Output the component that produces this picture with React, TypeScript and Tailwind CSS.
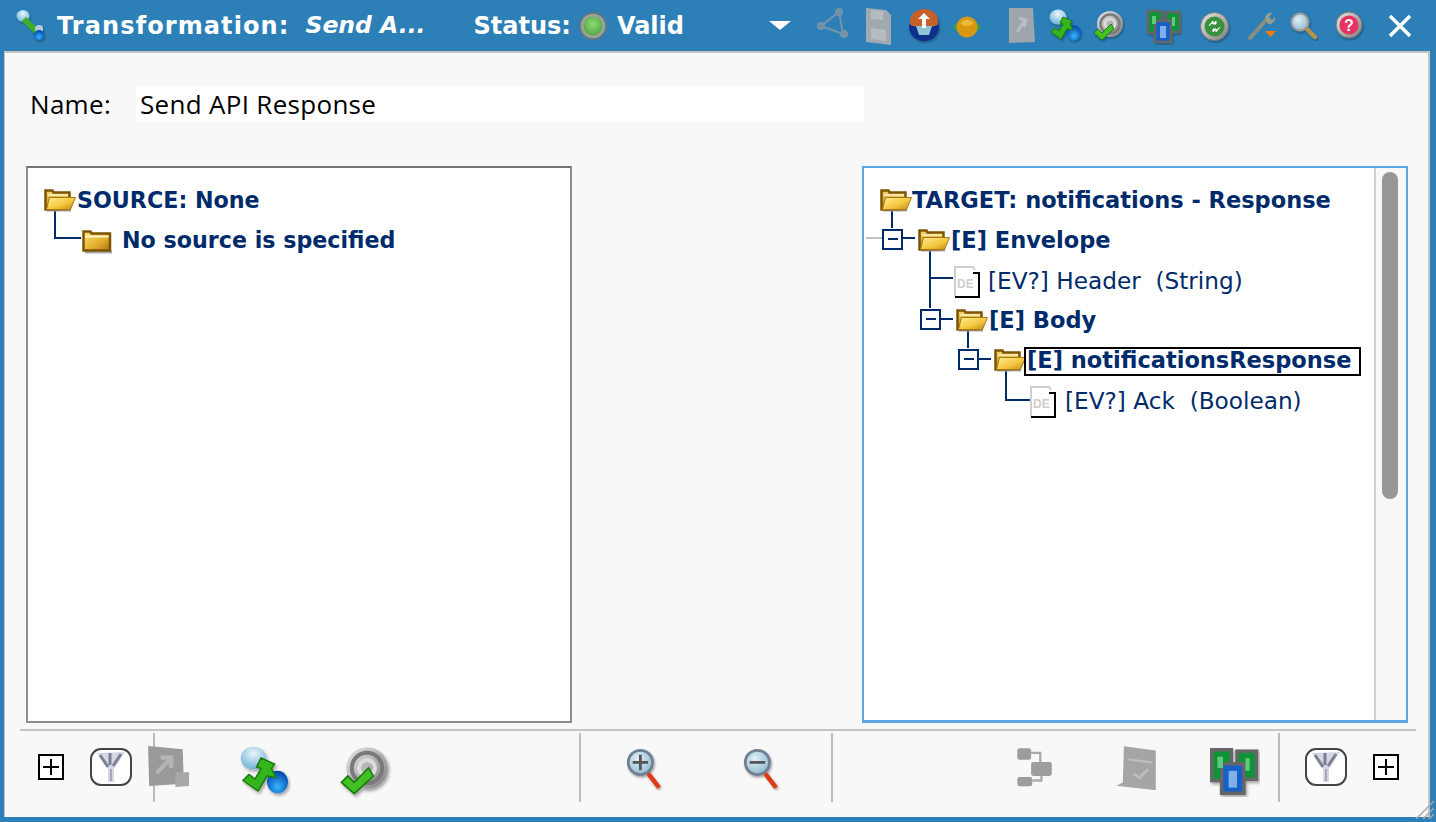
import { ReactNode } from 'react'

const NAVY = '#002b6b'

function SharedDefs() {
  return (
    <svg className="absolute w-0 h-0">
      <defs>
        <linearGradient id="folderBack" x1="0" y1="0" x2="0" y2="1">
          <stop offset="0" stopColor="#f7d670" />
          <stop offset="1" stopColor="#b98519" />
        </linearGradient>
        <linearGradient id="folderFront" x1="0" y1="0" x2="1" y2="1">
          <stop offset="0" stopColor="#ffee94" />
          <stop offset="0.55" stopColor="#f4c840" />
          <stop offset="1" stopColor="#c08a1a" />
        </linearGradient>
        <linearGradient id="folderClosed" x1="0" y1="0" x2="1" y2="1">
          <stop offset="0" stopColor="#fbe27e" />
          <stop offset="0.6" stopColor="#e3ad2c" />
          <stop offset="1" stopColor="#a9741a" />
        </linearGradient>
        <radialGradient id="blueBall" cx="0.5" cy="0.7" r="0.7">
          <stop offset="0" stopColor="#35b5ff" />
          <stop offset="1" stopColor="#0040a8" />
        </radialGradient>
        <radialGradient id="paleBall" cx="0.5" cy="0.3" r="0.7">
          <stop offset="0" stopColor="#eaf6fb" />
          <stop offset="1" stopColor="#6fb3d8" />
        </radialGradient>
        <radialGradient id="greenLed" cx="0.5" cy="0.4" r="0.6">
          <stop offset="0" stopColor="#8fdc72" />
          <stop offset="1" stopColor="#52a648" />
        </radialGradient>
        <linearGradient id="silver" x1="0" y1="0" x2="1" y2="1">
          <stop offset="0" stopColor="#e8e8e8" />
          <stop offset="1" stopColor="#7d7d7d" />
        </linearGradient>
        <radialGradient id="lens" cx="0.4" cy="0.35" r="0.7">
          <stop offset="0" stopColor="#dff0f7" />
          <stop offset="1" stopColor="#8fb8d0" />
        </radialGradient>
        <filter id="softShadow" x="-20%" y="-20%" width="150%" height="150%">
          <feDropShadow dx="1" dy="1.5" stdDeviation="1" floodColor="#000" floodOpacity="0.35" />
        </filter>
      </defs>
    </svg>
  )
}

function FolderOpen({ className = '' }: { className?: string }) {
  return (
    <svg viewBox="0 0 32 24" className={`w-[32px] h-[24px] shrink-0 ${className}`}>
      <path d="M3 23.500h24v-2H3z" fill="#aaa" />
      <path d="M1.500 21.500V2.500h7l1 2h16v16.500z" fill="url(#folderBack)" stroke="#7c5402" strokeWidth="2.500" />
      <path d="M4 7h20" stroke="#fff3c0" strokeWidth="1.500" />
      <path d="M2.500 21.500L5.500 9.500H31.500l-5 12z" fill="url(#folderFront)" stroke="#a87a10" strokeWidth="1" />
    </svg>
  )
}

function FolderClosed({ className = '' }: { className?: string }) {
  return (
    <svg viewBox="0 0 30 25" className={`w-[30px] h-[25px] shrink-0 ${className}`}>
      <path d="M3 24.500h27v-3H3z" fill="#aaa" />
      <path d="M1.500 21.500V2.500h7l1 2h18.500v17z" fill="url(#folderClosed)" stroke="#7c5402" strokeWidth="2.500" />
      <path d="M3 7.500h23.500" stroke="#fff6c8" strokeWidth="2" />
    </svg>
  )
}

function DocDE({ className = '' }: { className?: string }) {
  return (
    <svg viewBox="0 0 26 32" className={`w-[26px] h-[32px] shrink-0 ${className}`}>
      <path d="M1 1h17l3 3v4h4v23H1z" fill="#fff" />
      <path d="M1 31V1h18l2 3" fill="none" stroke="#d0d0d0" strokeWidth="2" />
      <path d="M19 7h6v24H1" fill="none" stroke="#000" strokeWidth="2" />
      <text x="3" y="22" fontSize="12" fontWeight="700" fontFamily="'Liberation Sans', sans-serif" fill="#cfcfcf">DE</text>
    </svg>
  )
}

function Toggle({ className = '' }: { className?: string }) {
  return (
    <div className={`w-[21px] h-[21px] -mt-[2px] shrink-0 border-2 border-[#002b6b] bg-white flex items-center justify-center ${className}`}>
      <div className="w-[10px] h-[2px] bg-[#002b6b]" />
    </div>
  )
}

function PlusBox() {
  return (
    <div className="w-[26px] h-[26px] shrink-0 border-2 border-black bg-white flex items-center justify-center relative">
      <div className="w-[16px] h-[2px] bg-black" />
      <div className="absolute w-[2px] h-[16px] bg-black" />
    </div>
  )
}

function FunnelButton() {
  return (
    <div className="w-[42px] h-[38px] shrink-0 rounded-[11px] border-2 border-[#444] bg-white flex items-center justify-center">
      <svg viewBox="0 0 32 34" className="w-[32px] h-[34px] blur-[0.4px]">
        <path d="M2 3l28-1-11 17v13h-6V19z" fill="#d5d7e4" />
        <path d="M5 5l8 12M15 3v12M26 4l-8 12" stroke="#7c7f98" strokeWidth="3" fill="none" />
        <path d="M16 19v12" stroke="#a4a7ba" strokeWidth="2" />
      </svg>
    </div>
  )
}

// toolbar pictures, blurred a little like scaled-up bitmaps
function Icon({ size = 40, h, scale = 1, children }: { size?: number; h?: number; scale?: number; children: ReactNode }) {
  return (
    <svg
      viewBox={`0 0 ${size} ${h ?? size}`}
      width={size * scale}
      height={(h ?? size) * scale}
      className="shrink-0 blur-[0.5px]"
    >
      {children}
    </svg>
  )
}

type Scaled = { scale?: number }

const DbCheck = ({ scale }: Scaled) => (
  <Icon size={36} scale={scale}>
    <g filter="url(#softShadow)">
      <ellipse cx="11" cy="8" rx="8.500" ry="7.500" fill="url(#paleBall)" />
      <ellipse cx="27" cy="24" rx="7" ry="7.500" fill="url(#blueBall)" />
      <path d="M16 8l9 4-2 3 3 6-6-1-6 10-10-7 4-4 4 3 4-7-3-1z" fill="#36b51c" stroke="#1a7a0c" strokeWidth="1" />
    </g>
  </Icon>
)

const RingCheck = ({ scale }: Scaled) => (
  <Icon size={36} scale={scale}>
    <g filter="url(#softShadow)">
      <circle cx="20" cy="15" r="13" fill="url(#silver)" />
      <circle cx="20" cy="15" r="9.500" fill="none" stroke="#7a7a7a" strokeWidth="2.500" />
      <circle cx="20" cy="15" r="5" fill="none" stroke="#ddd" strokeWidth="2.500" />
      <path d="M4 24l4-4 4 4 9-9 3 5-12 11z" fill="#45c021" stroke="#1a7a0c" strokeWidth="1" />
    </g>
  </Icon>
)

const ScreensIcon = ({ scale }: Scaled) => (
  <Icon size={36} scale={scale}>
    <g filter="url(#softShadow)">
      <rect x="2" y="2" width="14" height="22" fill="#0b9438" stroke="#666" strokeWidth="2.500" />
      <rect x="20" y="3" width="14" height="20" fill="#0b9438" stroke="#666" strokeWidth="2.500" />
      <rect x="9" y="12" width="16" height="21" fill="#1260c8" stroke="#666" strokeWidth="2.500" />
      <rect x="14" y="17" width="6" height="12" fill="#7fb0e6" />
      <rect x="6" y="7" width="4" height="8" fill="#5fc97e" />
      <rect x="26" y="8" width="3" height="9" fill="#5fc97e" />
    </g>
  </Icon>
)

const GrayGraph = () => (
  <Icon size={36}>
    <g stroke="#909aa6" strokeWidth="2" fill="#8c949e" opacity="0.75">
      <path d="M4 20L22 6l4 22z" fill="none" />
      <circle cx="4" cy="20" r="3" />
      <circle cx="22" cy="6" r="3" />
      <circle cx="27" cy="28" r="3" />
    </g>
  </Icon>
)

const GrayFloppy = () => (
  <Icon size={30} h={40}>
    <path d="M3 2l20 2 5 5 0 30-25-3z" fill="#a1a8af" />
    <path d="M8 4l12 1v9l-12-1zM8 22l15 2v11l-15-2z" fill="#b6bcc2" />
  </Icon>
)

const GrayDoc = () => (
  <Icon size={30} h={40}>
    <path d="M2 2h24l2 34-26 1z" fill="#9ea5ac" />
    <path d="M10 26l8-12M12 12l7 2-2 7" stroke="#b9bec4" strokeWidth="3" fill="none" />
  </Icon>
)

const OrangeBowl = () => (
  <Icon size={36}>
    <g filter="url(#softShadow)">
      <ellipse cx="17" cy="13" rx="14" ry="12" fill="#c8612b" />
      <path d="M2 16c2 4 28 4 30 0 1 10-6 17-15 17S1 26 2 16z" fill="#0c2f8a" />
      <path d="M9 18h16l-3 9h-10z" fill="#8fc3d8" />
      <path d="M17 5l6 6h-4v9h-4v-9h-4z" fill="#fff" />
    </g>
  </Icon>
)

const OrangeDot = () => (
  <Icon size={30}>
    <path d="M1 15l6-6v12zM29 15l-6-6v12z" fill="#3fa53a" />
    <circle cx="15" cy="15" r="10.500" fill="#d9980f" />
    <ellipse cx="15" cy="11" rx="6" ry="3" fill="#ecba3a" />
  </Icon>
)

const CircleGreen = () => (
  <Icon size={32}>
    <g filter="url(#softShadow)">
      <circle cx="15.500" cy="15.500" r="14" fill="url(#silver)" stroke="#777" />
      <circle cx="15.500" cy="15.500" r="10" fill="#37913c" />
      <path d="M10 15l4-5v3h3v-3M21 16l-4 5v-3h-3v3" fill="#fff" stroke="#fff" strokeWidth="1" />
    </g>
  </Icon>
)

const Wrench = () => (
  <Icon size={32}>
    <path d="M3 29L22 8" stroke="#8c8f7e" strokeWidth="4" />
    <path d="M19 9c0-4 4-7 7-6l-3 4 3 3 3-3c1 4-3 8-7 7z" fill="#9a9c8c" />
    <path d="M19 21h11l-5.500 6z" fill="#f07c10" />
  </Icon>
)

const Magnifier = () => (
  <Icon size={30}>
    <g filter="url(#softShadow)">
      <path d="M17 17l9 9" stroke="#b2934e" strokeWidth="4.500" strokeLinecap="round" />
      <circle cx="11" cy="11" r="8.500" fill="url(#lens)" stroke="#9a9a9a" strokeWidth="2" />
    </g>
  </Icon>
)

const HelpRed = () => (
  <Icon size={30}>
    <g filter="url(#softShadow)">
      <circle cx="14" cy="14" r="13" fill="url(#silver)" stroke="#777" />
      <circle cx="14" cy="14" r="9.500" fill="#e8305e" />
      <text x="14" y="20" textAnchor="middle" fontSize="16" fontWeight="700" fill="#fff" fontFamily="'Liberation Sans', sans-serif">?</text>
    </g>
  </Icon>
)

const ZoomLens = ({ plus }: { plus?: boolean }) => (
  <Icon size={40} scale={1.1}>
    <g filter="url(#softShadow)">
      <path d="M21 24l10 13" stroke="#dd3a12" strokeWidth="4" />
      <circle cx="14" cy="14" r="11" fill="url(#lens)" stroke="#6f7f92" strokeWidth="2.500" />
      <path d="M7 14h14" stroke="#555" strokeWidth="2.500" />
      {plus && <path d="M14 7v14" stroke="#555" strokeWidth="2.500" />}
    </g>
  </Icon>
)

const GrayExport = () => (
  <Icon size={42} scale={1.05}>
    <path d="M2 1l33 3 1 33-33 2z" fill="#9a9a9a" />
    <path d="M28 26h13v13l-13 1z" fill="#a8a8a8" />
    <path d="M10 27l13-14M14 12h10v10" stroke="#b5b5b5" strokeWidth="4" fill="none" />
  </Icon>
)

const GrayFlow = () => (
  <Icon size={36} scale={1.15}>
    <g fill="#9d9d9d">
      <rect x="2" y="2" width="12" height="10" rx="2" />
      <rect x="14" y="14" width="18" height="12" rx="2" />
      <rect x="2" y="27" width="13" height="8" rx="2" />
    </g>
    <path d="M14 6h8v8M15 30h8v-4" stroke="#aaa" strokeWidth="2" fill="none" />
  </Icon>
)

const GrayScroll = () => (
  <Icon size={42} scale={1.1}>
    <path d="M9 2l29 4v36L2 38l6-3z" fill="#a5a5a5" />
    <path d="M13 14l22 3" stroke="#bdbdbd" strokeWidth="2" />
    <path d="M18 27l5 4 8-8" stroke="#bdbdbd" strokeWidth="2.500" fill="none" />
  </Icon>
)

function Separator() {
  return <div className="w-[2px] h-[69px] bg-[#bdbdbd] shrink-0" />
}

function Row({ className = '', children }: { className?: string; children: ReactNode }) {
  return <div className={`h-[40px] flex items-center whitespace-pre relative [&>span]:mt-[2px] ${className}`}>{children}</div>
}

function Panel({ className = '', lines, children }: { className?: string; lines: ReactNode; children: ReactNode }) {
  return (
    <div className={`w-[546px] h-[557px] border-2 bg-white relative overflow-hidden pt-[12px] font-['DejaVu_Sans',sans-serif] text-[23.200px] text-[#002b6b] [&_.font-bold]:text-[22.500px] ${className}`}>
      <svg className="absolute inset-0 w-full h-full" fill="none" stroke={NAVY} strokeWidth="2">
        {lines}
      </svg>
      {children}
    </div>
  )
}

export default function App() {
  return (
    <div className="w-[1436px] h-[822px] bg-[#2d80b7] flex flex-col overflow-hidden select-none">
      <SharedDefs />

      {/* Title bar */}
      <div className="h-[51px] shrink-0 flex items-center text-white font-['DejaVu_Sans',sans-serif] font-bold text-[24px] whitespace-pre">
        <div className="ml-[14px] w-[43px] shrink-0">
          <Icon size={36}>
            <g filter="url(#softShadow)">
              <ellipse cx="9" cy="8" rx="6.500" ry="6" fill="url(#paleBall)" />
              <path d="M10 11l14 14" stroke="#3fae2a" strokeWidth="6" />
              <circle cx="25" cy="21" r="4" fill="#b8cce0" />
              <circle cx="25" cy="27" r="5" fill="url(#blueBall)" />
            </g>
          </Icon>
        </div>
        <span className="tracking-[1.100px]">Transformation:</span>
        <span className="ml-[16px] italic text-[23.500px]">Send A...</span>
        <span className="ml-[48px]">Status:</span>
        <svg viewBox="0 0 28 28" className="ml-[8px] w-[28px] h-[28px] shrink-0">
          <circle cx="14" cy="14" r="13" fill="#9aa39a" stroke="#6d736d" strokeWidth="1.500" />
          <circle cx="14" cy="14" r="9.500" fill="url(#greenLed)" />
        </svg>
        <span className="ml-[10px]">Valid</span>

        {/* Caret and window actions */}
        <div className="w-0 h-0 ml-[85px] shrink-0 border-x-[11px] border-x-transparent border-t-[9px] border-t-white" />
        <div className="ml-[26px] -mt-[4px]"><GrayGraph /></div>
        <div className="ml-[10px]"><GrayFloppy /></div>
        <div className="ml-[14px]"><OrangeBowl /></div>
        <div className="ml-[9px] mt-[3px]"><OrangeDot /></div>
        <div className="ml-[25px]"><GrayDoc /></div>
        <div className="ml-[10px] mt-[3px]"><DbCheck /></div>
        <div className="ml-[7px] mt-[3px]"><RingCheck /></div>
        <div className="ml-[20px] mt-[3px]"><ScreensIcon /></div>
        <div className="ml-[17px] mt-[2px]"><CircleGreen /></div>
        <div className="ml-[15px]"><Wrench /></div>
        <div className="ml-[11px]"><Magnifier /></div>
        <div className="ml-[16px]"><HelpRed /></div>
        <svg viewBox="0 0 24 24" className="ml-[23px] w-[24px] h-[24px] shrink-0">
          <path d="M2 2l20 20M22 2L2 22" stroke="#fff" strokeWidth="3.500" />
        </svg>
      </div>

      {/* Body */}
      <div className="flex-1 min-h-0 ml-[4px] mr-[6px] bg-[#f8f8f8] border-l border-r-2 border-t-2 border-[#c4c4c4] flex flex-col relative">
        <div className="mt-[33px] h-[36px] flex items-center shrink-0 font-['Open_Sans',sans-serif] text-[26px] tracking-[0.300px] text-black whitespace-pre">
          <span className="ml-[25px]">Name:</span>
          <div className="ml-[25px] w-[728px] h-[36px] bg-white flex items-center pl-[4px]">Send API Response</div>
        </div>

        <div className="mt-[44px] ml-[21px] flex justify-between w-[1382px] shrink-0">
          <Panel
            className="border-[#8e8e8e] border-t-[#737373]"
            lines={<path d="M27 42v28h26" />}
          >
            <Row className="pl-[16px]">
              <FolderOpen />
              <span className="font-bold ml-[1px] !text-[22.200px]">SOURCE: None</span>
            </Row>
            <Row className="pl-[54px]">
              <FolderClosed className="mt-[2px]" />
              <span className="font-bold ml-[10px] !text-[22.200px]">No source is specified</span>
            </Row>
          </Panel>

          <Panel
            className="border-[#5aa7e4] border-b-[3px]"
            lines={
              <>
                <path d="M2 70h16" stroke="#c2c2c2" />
                <path d="M28 40v20M39 70h12" />
                <path d="M66 82v58M66 110h23M76 151h13" />
                <path d="M104 162v18M114 191h13" />
                <path d="M142 202v30h24" />
              </>
            }
          >
            <div className="absolute right-0 top-0 bottom-0 w-[32px] bg-[#f8f8f8] border-l-2 border-[#d0d0d0]">
              <div className="mt-[4px] ml-[6px] w-[16px] h-[327px] rounded-[8px] bg-[#979797]" />
            </div>
            <Row className="pl-[16px]">
              <FolderOpen />
              <span className="font-bold">TARGET: notifications - Response</span>
            </Row>
            <Row className="pl-[18px]">
              <Toggle />
              <FolderOpen className="ml-[15px]" />
              <span className="font-bold ml-[1px]">[E] Envelope</span>
            </Row>
            <Row className="pl-[90px]">
              <DocDE className="mt-[4px]" />
              <span className="ml-[8px]">[EV?] Header  (String)</span>
            </Row>
            <Row className="pl-[56px]">
              <Toggle />
              <FolderOpen className="ml-[15px]" />
              <span className="font-bold ml-[1px]">[E] Body</span>
            </Row>
            <Row className="pl-[94px]">
              <Toggle />
              <FolderOpen className="ml-[15px]" />
              <span className="font-bold -ml-[2px] border-2 border-black px-[1px] h-[29px] w-[337px] flex items-center">[E] notificationsResponse</span>
            </Row>
            <Row className="pl-[166px]">
              <DocDE className="mt-[4px]" />
              <span className="ml-[9px]">[EV?] Ack  (Boolean)</span>
            </Row>
          </Panel>
        </div>

        {/* Bottom toolbar */}
        <div className="mt-[6px] ml-[15px] w-[1396px] h-[73px] border-t-2 border-[#c4c4c4] flex items-center pt-[1px] shrink-0">
          <div className="ml-[18px]"><PlusBox /></div>
          <div className="ml-[26px]"><FunnelButton /></div>
          <div className="ml-[21px]"><Separator /></div>
          <div className="-ml-[9px] relative"><GrayExport /></div>
          <div className="ml-[47px] mt-[12px]"><DbCheck scale={1.5} /></div>
          <div className="ml-[44px] mt-[12px]"><RingCheck scale={1.6} /></div>
          <div className="ml-[186px]"><Separator /></div>
          <div className="ml-[44px] mt-[4px]"><ZoomLens plus /></div>
          <div className="ml-[73px] mt-[4px]"><ZoomLens /></div>
          <div className="ml-[45px]"><Separator /></div>
          <div className="ml-[182px]"><GrayFlow /></div>
          <div className="ml-[58px]"><GrayScroll /></div>
          <div className="ml-[49px] mt-[10px]"><ScreensIcon scale={1.4} /></div>
          <div className="ml-[18px]"><Separator /></div>
          <div className="ml-[25px]"><FunnelButton /></div>
          <div className="ml-[26px]"><PlusBox /></div>
        </div>

        <div className="h-[2px] bg-[#f8f8f8]" />
        {/* Resize grip */}
        <svg viewBox="0 0 20 20" className="absolute right-[-6px] bottom-[-2px] w-[20px] h-[20px]">
          <path d="M2 20L20 2M9 20L20 9M15 20l5-5" stroke="#a9a9a9" strokeWidth="1.500" />
        </svg>
      </div>
      <div className="h-[3px] bg-[#2d80b7] shrink-0 mt-[2px]" />
    </div>
  )
}
